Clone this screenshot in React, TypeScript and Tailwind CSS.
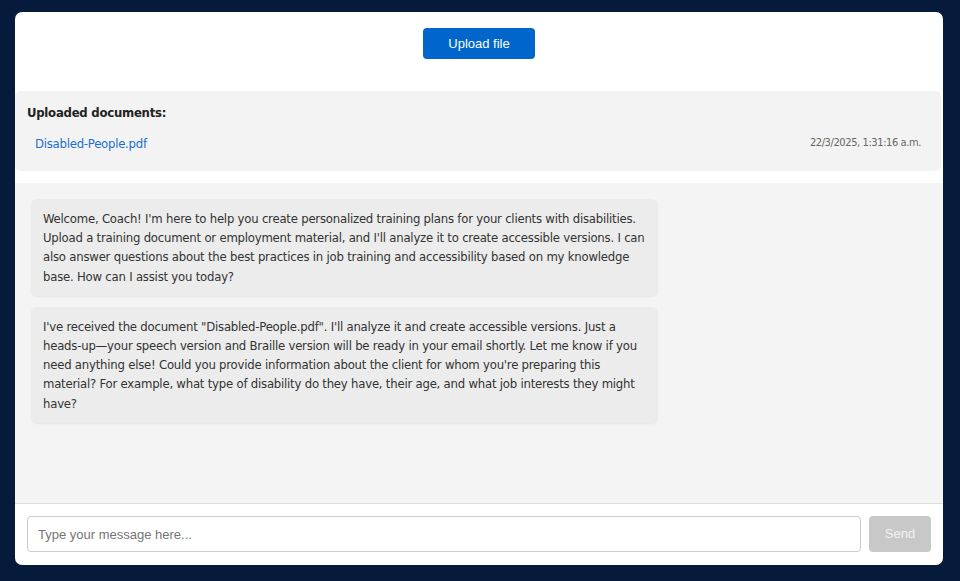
import React from "react";

const body = { fontFamily: '"DejaVu Sans Condensed", "DejaVu Sans", sans-serif' };
const arial = { fontFamily: '"Liberation Sans", Arial, sans-serif' };

const msg1 = [
  "Welcome, Coach! I'm here to help you create personalized training plans for your clients with disabilities.",
  "Upload a training document or employment material, and I'll analyze it to create accessible versions. I can",
  "also answer questions about the best practices in job training and accessibility based on my knowledge",
  "base. How can I assist you today?",
];

const msg2 = [
  "I've received the document \"Disabled-People.pdf\". I'll analyze it and create accessible versions. Just a",
  "heads-up—your speech version and Braille version will be ready in your email shortly. Let me know if you",
  "need anything else! Could you provide information about the client for whom you're preparing this",
  "material? For example, what type of disability do they have, their age, and what job interests they might",
  "have?",
];

function Bubble({ lines }: { lines: string[] }) {
  return (
    <div className="max-w-[70%] whitespace-nowrap rounded-[6px] bg-[#ececec] px-3 py-[10px] text-[13px] leading-[19.2px] tracking-[-0.22px] text-[#333] shadow-[0_1px_2px_rgba(0,0,0,0.06)]">
      {lines.map((l, i) => (
        <div key={i}>{l}</div>
      ))}
    </div>
  );
}

export default function App() {
  return (
    <div className="min-h-screen bg-[#061a3c] pt-[12px] pb-[16px] pl-[15px]" style={body}>
      <div className="flex h-[553px] w-[928px] flex-col overflow-hidden rounded-[7px] bg-white">
        <div className="flex justify-center pt-4 pb-8">
          <button
            className="h-[31px] w-[112px] rounded-[4px] bg-[#0066cc] text-[13px] text-white"
            style={arial}
          >
            Upload file
          </button>
        </div>
        <div className="mr-[2px] h-[80px] rounded-[5px] bg-[#f3f3f3] px-3 pt-[12px]">
          <div className="text-[13px] font-bold leading-[19.5px] tracking-[-0.25px] text-[#222]">Uploaded documents:</div>
          <div className="mt-[11px] flex items-center justify-between pl-2 pr-2">
            <span className="text-[13px] leading-[19.5px] tracking-[-0.25px] text-[#1a6fd1]">Disabled-People.pdf</span>
            <span className="text-[11px] tracking-[-0.4px] text-[#666]">22/3/2025, 1:31:16 a.m.</span>
          </div>
        </div>
        <div className="mt-3 flex flex-1 flex-col gap-[11px] bg-[#f4f4f4] px-4 pt-4">
          <Bubble lines={msg1} />
          <Bubble lines={msg2} />
        </div>
        <div className="flex gap-2 border-t border-[#dddddd] px-3 pt-3 pb-[13px]">
          <input
            className="h-[36px] flex-1 rounded-[4px] border border-[#cccccc] px-[10px] text-[13px] text-[#333] placeholder:text-[#757575] outline-none"
            style={arial}
            placeholder="Type your message here..."
          />
          <button
            className="h-[36px] w-[62px] rounded-[4px] bg-[#c8c8c8] text-[13px] text-[#f2f2f2]"
            style={arial}
          >
            Send
          </button>
        </div>
      </div>
    </div>
  );
}
